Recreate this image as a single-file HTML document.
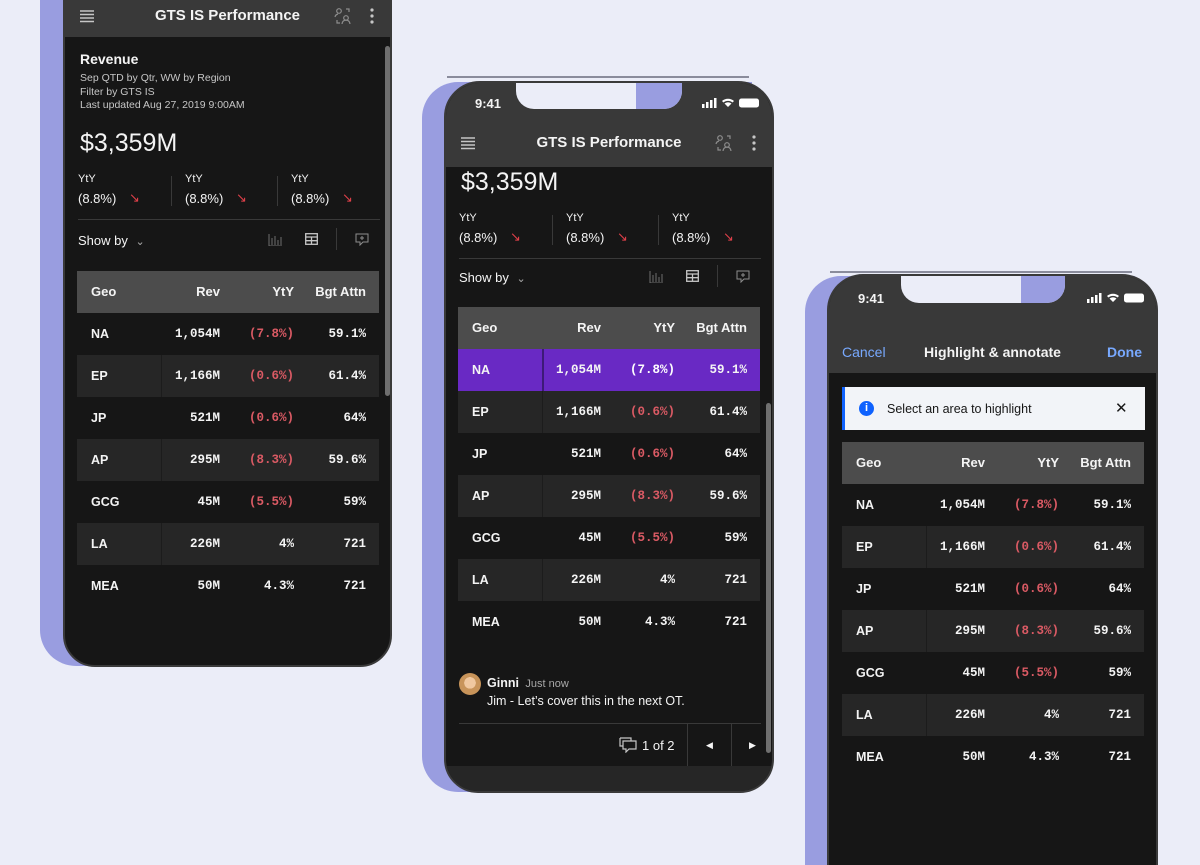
<!DOCTYPE html>
<html style="width:1200px;height:865px;overflow:hidden"><head><meta charset="utf-8"><style>
*{margin:0;padding:0;box-sizing:border-box}
body{width:1200px;height:865px;background:#ebedf8;position:relative;overflow:hidden;font-family:"Liberation Sans",sans-serif;color:#f4f4f4}
.abs{position:absolute}
.purple{position:absolute;background:#999de0}
.phone{position:absolute;background:#161616;overflow:hidden;border:2px solid #3a3a3a}
.hdr{position:absolute;left:0;right:0;background:#393939}
.title{position:absolute;left:0;right:0;text-align:center;font-weight:bold;font-size:15px}
.tbl{position:absolute;width:302px}
.th{height:42px;background:#4c4c4c;position:relative;font-weight:bold;font-size:13px}
.r{height:42px;position:relative;font-size:13px}
.r.alt{background:#262626}
.r.alt::before{content:"";position:absolute;left:84px;top:0;bottom:0;width:1px;background:#1c1c1c}
.r.sel{background:#6929c4}
.r.sel::before{content:"";position:absolute;left:84px;top:0;bottom:0;width:2px;background:#3d1a78}
.th span,.r span{position:absolute;line-height:42px;top:0}
.r span{font-family:"Liberation Mono",monospace;font-weight:bold;font-size:12.5px}
.r span.g{font-family:"Liberation Sans",sans-serif;font-size:12.5px}
.g{left:14px}.rv{right:159px}.yt{right:85px}.bg{right:13px}
.red{color:#da5a64}
.sel .red{color:#fff}
.kpi{position:absolute;font-size:11px}
.kpi b{display:block;font-weight:normal;font-size:13px;margin-top:6px}
.arrow{position:absolute;color:#e0404a;font-size:13px}
.vd{position:absolute;width:1px;background:#393939}
.hl{position:absolute;height:1px;background:#393939}
.icon{position:absolute}
</style></head><body>

<!-- Phone 1 -->
<div class="purple" style="left:40px;top:-20px;width:330px;height:686px;border-radius:0 0 30px 36px"></div>
<div class="phone" style="left:63px;top:-2px;width:329px;height:669px;border-radius:0 0 32px 32px">
  <div class="hdr" style="top:0;height:37px"></div>
  <svg class="icon" style="left:14px;top:9px" width="16" height="14"><g stroke="#c6c6c6" stroke-width="1.4"><path d="M1 2h14M1 5.5h14M1 9h14M1 12.5h14"/></g></svg>
  <div class="title" style="top:7px">GTS IS Performance</div>
  <svg class="icon" style="left:269px;top:7px" width="18" height="18"><g stroke="#8d8d8d" stroke-width="1.2" fill="none"><circle cx="5" cy="4" r="2.3"/><circle cx="12" cy="11" r="2.3"/><path d="M1 10a4 4 0 0 1 3-3M8 17a4 4 0 0 1 8 0M12 2h3v3M3 13v3h3"/></g></svg>
  <svg class="icon" style="left:305px;top:8px" width="4" height="16"><g fill="#c6c6c6"><circle cx="2" cy="2" r="1.6"/><circle cx="2" cy="8" r="1.6"/><circle cx="2" cy="14" r="1.6"/></g></svg>
  <div class="abs" style="left:320px;top:46px;width:5px;height:350px;background:#6f6f6f;border-radius:3px"></div>
  <div class="abs" style="left:15px;top:51px;font-weight:bold;font-size:14px">Revenue</div>
  <div class="abs" style="left:15px;top:72px;font-size:10.5px;line-height:13.5px;color:#c6c6c6">Sep QTD by Qtr, WW by Region<br>Filter by GTS IS<br>Last updated Aug 27, 2019 9:00AM</div>
  <div class="abs" style="left:15px;top:129px;font-size:25px">$3,359M</div>
  <div class="kpi" style="left:13px;top:173px">YtY<b>(8.8%)</b></div><div class="arrow" style="left:64px;top:190px">↘</div>
  <div class="vd" style="left:106px;top:176px;height:30px"></div>
  <div class="kpi" style="left:120px;top:173px">YtY<b>(8.8%)</b></div><div class="arrow" style="left:171px;top:190px">↘</div>
  <div class="vd" style="left:212px;top:176px;height:30px"></div>
  <div class="kpi" style="left:226px;top:173px">YtY<b>(8.8%)</b></div><div class="arrow" style="left:277px;top:190px">↘</div>
  <div class="hl" style="left:13px;top:219px;width:302px"></div>
  <div class="abs" style="left:13px;top:233px;font-size:13px">Show by <span style="color:#aaa;font-size:11px;margin-left:4px">⌄</span></div>
  <svg class="icon" style="left:203px;top:234px" width="14" height="12"><path d="M1 0v12h13M4 11V4M7 11V2M10 11V6M13 11V3" stroke="#6f6f6f" fill="none"/></svg>
  <svg class="icon" style="left:240px;top:233px" width="13" height="12"><g stroke="#c6c6c6" fill="none" stroke-width="1.3"><rect x=".7" y=".7" width="11.6" height="10.6"/><path d="M1 4h11M1 7.7h11M6.5 4v7"/></g></svg>
  <div class="vd" style="left:271px;top:228px;height:22px"></div>
  <svg class="icon" style="left:290px;top:233px" width="14" height="13"><path d="M1 1h12v8H8l-3 3V9H1z M7 3v4M5 5h4" stroke="#8d8d8d" fill="none"/></svg>
  <div class="tbl" style="left:12px;top:271px">
    <div class="th"><span class="g">Geo</span><span class="rv">Rev</span><span class="yt">YtY</span><span class="bg">Bgt Attn</span></div>
    <div class="r"><span class="g">NA</span><span class="rv">1,054M</span><span class="yt red">(7.8%)</span><span class="bg">59.1%</span></div>
    <div class="r alt"><span class="g">EP</span><span class="rv">1,166M</span><span class="yt red">(0.6%)</span><span class="bg">61.4%</span></div>
    <div class="r"><span class="g">JP</span><span class="rv">521M</span><span class="yt red">(0.6%)</span><span class="bg">64%</span></div>
    <div class="r alt"><span class="g">AP</span><span class="rv">295M</span><span class="yt red">(8.3%)</span><span class="bg">59.6%</span></div>
    <div class="r"><span class="g">GCG</span><span class="rv">45M</span><span class="yt red">(5.5%)</span><span class="bg">59%</span></div>
    <div class="r alt"><span class="g">LA</span><span class="rv">226M</span><span class="yt">4%</span><span class="bg">721</span></div>
    <div class="r"><span class="g">MEA</span><span class="rv">50M</span><span class="yt">4.3%</span><span class="bg">721</span></div>
  </div>
</div>

<!-- Phone 2 -->
<div class="abs" style="left:447px;top:76px;width:302px;height:2px;background:#8a8c9c"></div>
<div class="purple" style="left:422px;top:82px;width:330px;height:710px;border-radius:36px 0 30px 36px"></div>
<div class="phone" style="left:444px;top:81px;width:330px;height:712px;border-radius:36px 36px 34px 34px">
  <div class="hdr" style="top:0;height:84px"></div>
  <div class="abs" style="left:70px;top:-2px;width:166px;height:28px;background:#ebedf8;border-radius:0 0 18px 18px"></div>
  <div class="abs" style="left:190px;top:-2px;width:46px;height:28px;background:#999de0;border-radius:0 0 18px 0"></div>
  <div class="abs" style="left:29px;top:13px;font-weight:bold;font-size:13px">9:41</div>
  <svg class="icon" style="left:256px;top:14px" width="62" height="12"><g fill="#fff"><rect x="0" y="7" width="2.5" height="4"/><rect x="4" y="5" width="2.5" height="6"/><rect x="8" y="3" width="2.5" height="8"/><rect x="12" y="1" width="2.5" height="10"/><path d="M20 4a9 9 0 0 1 12 0l-1.5 1.5a7 7 0 0 0-9 0zM22.5 6.5a5.5 5.5 0 0 1 7 0L26 10z"/><rect x="37" y="1.5" width="20" height="9" rx="2.5"/></g></svg>
  <svg class="icon" style="left:14px;top:53px" width="16" height="14"><g stroke="#c6c6c6" stroke-width="1.4"><path d="M1 2h14M1 5.5h14M1 9h14M1 12.5h14"/></g></svg>
  <div class="title" style="top:51px">GTS IS Performance</div>
  <svg class="icon" style="left:269px;top:51px" width="18" height="18"><g stroke="#8d8d8d" stroke-width="1.2" fill="none"><circle cx="5" cy="4" r="2.3"/><circle cx="12" cy="11" r="2.3"/><path d="M1 10a4 4 0 0 1 3-3M8 17a4 4 0 0 1 8 0M12 2h3v3M3 13v3h3"/></g></svg>
  <svg class="icon" style="left:306px;top:52px" width="4" height="16"><g fill="#c6c6c6"><circle cx="2" cy="2" r="1.6"/><circle cx="2" cy="8" r="1.6"/><circle cx="2" cy="14" r="1.6"/></g></svg>
  <div class="abs" style="left:320px;top:320px;width:5px;height:350px;background:#6f6f6f;border-radius:3px"></div>
  <div class="abs" style="left:15px;top:85px;font-size:25px">$3,359M</div>
  <div class="kpi" style="left:13px;top:129px">YtY<b>(8.8%)</b></div><div class="arrow" style="left:64px;top:146px">↘</div>
  <div class="vd" style="left:106px;top:132px;height:30px"></div>
  <div class="kpi" style="left:120px;top:129px">YtY<b>(8.8%)</b></div><div class="arrow" style="left:171px;top:146px">↘</div>
  <div class="vd" style="left:212px;top:132px;height:30px"></div>
  <div class="kpi" style="left:226px;top:129px">YtY<b>(8.8%)</b></div><div class="arrow" style="left:277px;top:146px">↘</div>
  <div class="hl" style="left:13px;top:175px;width:302px"></div>
  <div class="abs" style="left:13px;top:187px;font-size:13px">Show by <span style="color:#aaa;font-size:11px;margin-left:4px">⌄</span></div>
  <svg class="icon" style="left:203px;top:188px" width="14" height="12"><path d="M1 0v12h13M4 11V4M7 11V2M10 11V6M13 11V3" stroke="#6f6f6f" fill="none"/></svg>
  <svg class="icon" style="left:240px;top:187px" width="13" height="12"><g stroke="#c6c6c6" fill="none" stroke-width="1.3"><rect x=".7" y=".7" width="11.6" height="10.6"/><path d="M1 4h11M1 7.7h11M6.5 4v7"/></g></svg>
  <div class="vd" style="left:271px;top:182px;height:22px"></div>
  <svg class="icon" style="left:290px;top:187px" width="14" height="13"><path d="M1 1h12v8H8l-3 3V9H1z M7 3v4M5 5h4" stroke="#8d8d8d" fill="none"/></svg>
  <div class="tbl" style="left:12px;top:224px">
    <div class="th"><span class="g">Geo</span><span class="rv">Rev</span><span class="yt">YtY</span><span class="bg">Bgt Attn</span></div>
    <div class="r sel"><span class="g">NA</span><span class="rv">1,054M</span><span class="yt red">(7.8%)</span><span class="bg">59.1%</span></div>
    <div class="r alt"><span class="g">EP</span><span class="rv">1,166M</span><span class="yt red">(0.6%)</span><span class="bg">61.4%</span></div>
    <div class="r"><span class="g">JP</span><span class="rv">521M</span><span class="yt red">(0.6%)</span><span class="bg">64%</span></div>
    <div class="r alt"><span class="g">AP</span><span class="rv">295M</span><span class="yt red">(8.3%)</span><span class="bg">59.6%</span></div>
    <div class="r"><span class="g">GCG</span><span class="rv">45M</span><span class="yt red">(5.5%)</span><span class="bg">59%</span></div>
    <div class="r alt"><span class="g">LA</span><span class="rv">226M</span><span class="yt">4%</span><span class="bg">721</span></div>
    <div class="r"><span class="g">MEA</span><span class="rv">50M</span><span class="yt">4.3%</span><span class="bg">721</span></div>
  </div>
  <div class="abs" style="left:13px;top:590px;width:22px;height:22px;border-radius:50%;background:radial-gradient(circle at 50% 45%,#f0c8a0 0 35%,#c8945a 36% 100%)"></div>
  <div class="abs" style="left:41px;top:593px;font-size:12.5px;font-weight:bold">Ginni <span style="font-weight:normal;font-size:11px;color:#a8a8a8;margin-left:3px">Just now</span></div>
  <div class="abs" style="left:41px;top:611px;font-size:12.5px">Jim - Let’s cover this in the next OT.</div>
  <div class="hl" style="left:13px;top:640px;width:302px"></div>
  <svg class="icon" style="left:173px;top:654px" width="18" height="16"><g stroke="#c6c6c6" fill="none" stroke-width="1.2"><path d="M1 1h11v3M4 4h13v8h-7l-3 3v-3H4z"/><path d="M1 1v8h3"/></g></svg>
  <div class="abs" style="left:196px;top:655px;font-size:13px">1 of 2</div>
  <div class="vd" style="left:241px;top:641px;height:42px"></div>
  <div class="vd" style="left:285px;top:641px;height:42px"></div>
  <div class="abs" style="left:260px;top:657px;font-size:9px">◀</div>
  <div class="abs" style="left:303px;top:657px;font-size:9px">▶</div>
  <div class="abs" style="left:0;top:683px;width:330px;height:30px;background:#262626"></div>
</div>

<!-- Phone 3 -->
<div class="abs" style="left:830px;top:271px;width:302px;height:2px;background:#8a8c9c"></div>
<div class="purple" style="left:805px;top:276px;width:330px;height:589px;border-radius:36px 0 0 0"></div>
<div class="phone" style="left:827px;top:274px;width:331px;height:591px;border-radius:36px 36px 0 0;border-bottom:none">
  <div class="hdr" style="top:0;height:97px"></div>
  <div class="abs" style="left:72px;top:-2px;width:164px;height:29px;background:#ebedf8;border-radius:0 0 18px 18px"></div>
  <div class="abs" style="left:192px;top:-2px;width:44px;height:29px;background:#999de0;border-radius:0 0 18px 0"></div>
  <div class="abs" style="left:29px;top:15px;font-weight:bold;font-size:13px">9:41</div>
  <svg class="icon" style="left:258px;top:16px" width="62" height="12"><g fill="#fff"><rect x="0" y="7" width="2.5" height="4"/><rect x="4" y="5" width="2.5" height="6"/><rect x="8" y="3" width="2.5" height="8"/><rect x="12" y="1" width="2.5" height="10"/><path d="M20 4a9 9 0 0 1 12 0l-1.5 1.5a7 7 0 0 0-9 0zM22.5 6.5a5.5 5.5 0 0 1 7 0L26 10z"/><rect x="37" y="1.5" width="20" height="9" rx="2.5"/></g></svg>
  <div class="abs" style="left:13px;top:68px;font-size:14px;color:#78a9ff">Cancel</div>
  <div class="title" style="top:68px;font-size:14px">Highlight &amp; annotate</div>
  <div class="abs" style="right:14px;top:68px;font-size:14px;font-weight:bold;color:#78a9ff">Done</div>
  <div class="abs" style="left:13px;top:111px;width:303px;height:43px;background:#f2f4f8;border-left:3px solid #0f62fe"></div>
  <div class="abs" style="left:30px;top:125px;width:15px;height:15px;border-radius:50%;background:#0f62fe;color:#fff;font-size:11px;font-weight:bold;text-align:center;line-height:15px">i</div>
  <div class="abs" style="left:58px;top:126px;font-size:12.5px;color:#161616">Select an area to highlight</div>
  <div class="abs" style="left:286px;top:123px;font-size:15px;color:#161616">✕</div>
  <div class="tbl" style="left:13px;top:166px">
    <div class="th"><span class="g">Geo</span><span class="rv">Rev</span><span class="yt">YtY</span><span class="bg">Bgt Attn</span></div>
    <div class="r"><span class="g">NA</span><span class="rv">1,054M</span><span class="yt red">(7.8%)</span><span class="bg">59.1%</span></div>
    <div class="r alt"><span class="g">EP</span><span class="rv">1,166M</span><span class="yt red">(0.6%)</span><span class="bg">61.4%</span></div>
    <div class="r"><span class="g">JP</span><span class="rv">521M</span><span class="yt red">(0.6%)</span><span class="bg">64%</span></div>
    <div class="r alt"><span class="g">AP</span><span class="rv">295M</span><span class="yt red">(8.3%)</span><span class="bg">59.6%</span></div>
    <div class="r"><span class="g">GCG</span><span class="rv">45M</span><span class="yt red">(5.5%)</span><span class="bg">59%</span></div>
    <div class="r alt"><span class="g">LA</span><span class="rv">226M</span><span class="yt">4%</span><span class="bg">721</span></div>
    <div class="r"><span class="g">MEA</span><span class="rv">50M</span><span class="yt">4.3%</span><span class="bg">721</span></div>
  </div>
</div>
</body></html>
